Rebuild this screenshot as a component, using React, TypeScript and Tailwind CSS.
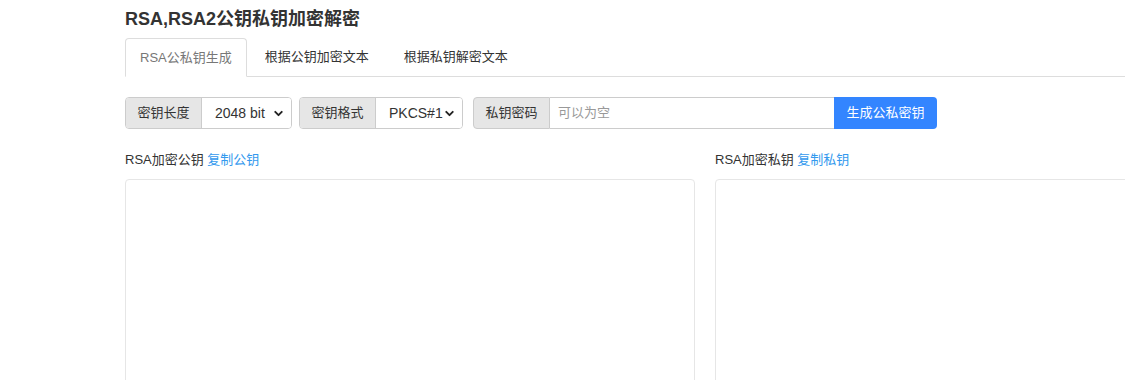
import { ChevronDown } from 'lucide-react';

const font = { fontFamily: '"Liberation Sans", "Noto Sans CJK SC", sans-serif' };

function AddonSelect({ label, value, width }: { label: string; value: string; width: string }) {
  return (
    <div className="flex h-8 rounded border border-[#ccc] overflow-hidden text-[13px] text-[#333]">
      <span className="flex items-center w-[76px] justify-center bg-[#e6e6e6] border-r border-[#ccc]">{label}</span>
      <div className={`flex items-center justify-between bg-white pl-[13px] pr-[6px] ${width}`}>
        <span className="text-[14px]">{value}</span>
        <ChevronDown className="w-[13px] h-[13px] text-[#222]" strokeWidth={3.5} />
      </div>
    </div>
  );
}

export default function App() {
  return (
    <div className="min-h-screen bg-white overflow-hidden" style={font}>
      <div className="ml-[125px] w-[1180px]">
        <h1 className="pt-[7px] h-[38px] text-[18px] font-bold text-[#333] leading-6">RSA,RSA2公钥私钥加密解密</h1>

        <div className="flex border-b border-[#ddd] h-[39px] text-[13px]">
          <div className="-mb-px h-[39px] px-[14px] flex items-center rounded-t border border-[#ddd] border-b-white bg-white text-[#777]">
            RSA公私钥生成
          </div>
          <div className="h-[38px] px-[16px] ml-[2px] flex items-center text-[#333]">根据公钥加密文本</div>
          <div className="h-[38px] px-[15px] ml-[4px] flex items-center text-[#333]">根据私钥解密文本</div>
        </div>

        <div className="flex mt-5 gap-[7px]">
          <AddonSelect label="密钥长度" value="2048 bit" width="w-[89px]" />
          <AddonSelect label="密钥格式" value="PKCS#1" width="w-[86px]" />
          <div className="flex h-8 ml-[3px] text-[13px]">
            <span className="flex items-center justify-center w-[77px] bg-[#e6e6e6] border border-[#ccc] rounded-l text-[#333]">私钥密码</span>
            <div className="flex items-center w-[284px] border-y border-[#ccc] pl-2 text-[#999] bg-white">可以为空</div>
            <button className="w-[103px] bg-[#3385ff] text-white rounded-r">生成公私密钥</button>
          </div>
        </div>

        <div className="grid grid-cols-[570px_1fr] gap-[20px] mt-[22px]">
          <div>
            <div className="text-[13px] text-[#333] leading-[18px]">
              RSA加密公钥 <span className="text-[#3399ee]">复制公钥</span>
            </div>
            <div className="mt-[10px] h-[260px] rounded border border-[#e6e6e6] bg-white" />
          </div>
          <div>
            <div className="text-[13px] text-[#333] leading-[18px]">
              RSA加密私钥 <span className="text-[#3399ee]">复制私钥</span>
            </div>
            <div className="mt-[10px] h-[260px] rounded border border-[#e6e6e6] bg-white" />
          </div>
        </div>
      </div>
    </div>
  );
}
